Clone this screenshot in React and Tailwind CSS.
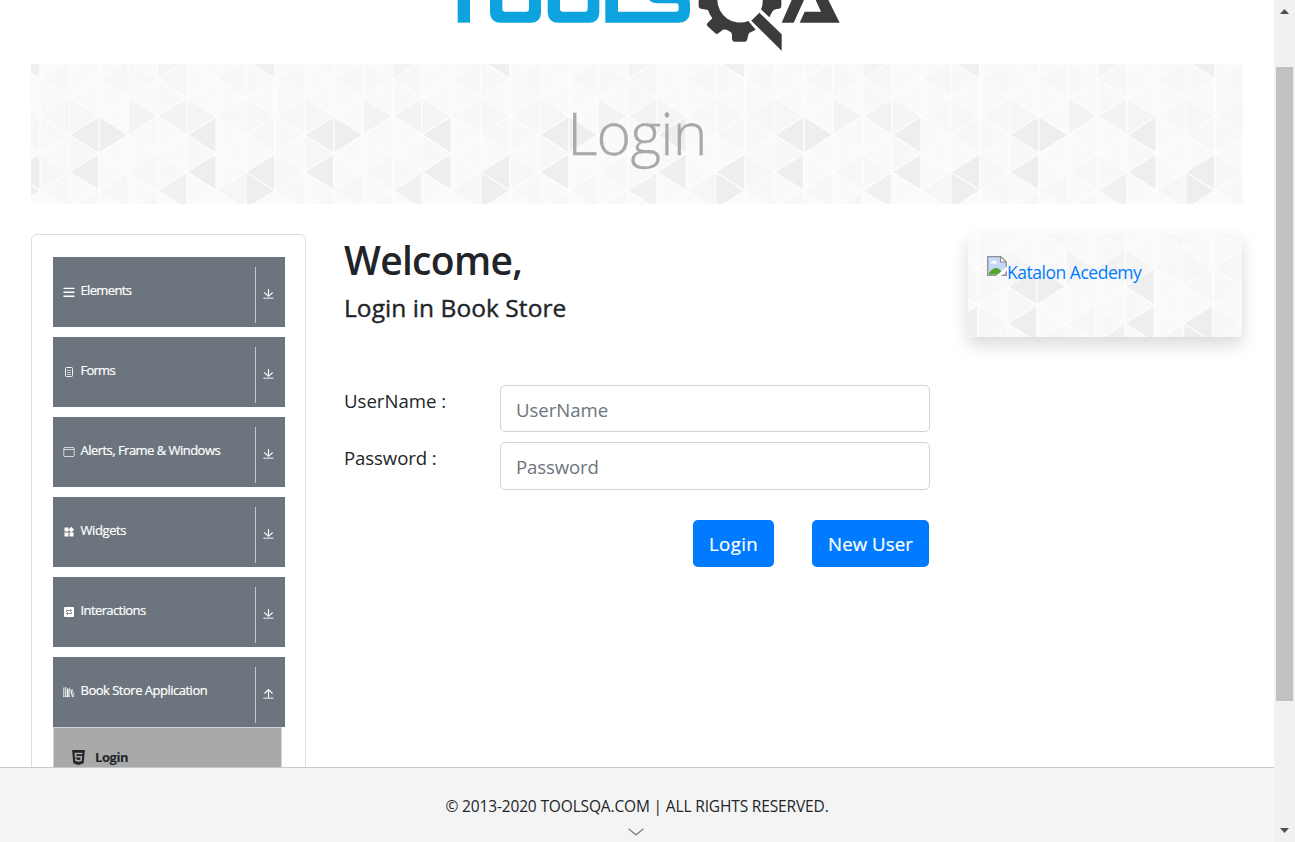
import React from "react";
import { MdWidgets } from "react-icons/md";
import { FaHtml5 } from "react-icons/fa";

const COL = 29.375;
const ROW = 18.57;
const SHADES = {
  "1,3": "#eeeeee", "2,3": "#eeeeee", "1,5": "#eeeeee", "5,3": "#eeeeee", "5,5": "#eeeeee",
  "7,5": "#eeeeee", "7,6": "#eeeeee", "7,-1": "#f0f0f0", "4,6": "#f1f1f1", "3,2": "#f3f3f3",
  "4,2": "#f3f3f3", "4,-1": "#f4f4f4", "2,0": "#f7f7f7", "3,0": "#f8f8f8", "4,0": "#f7f7f7",
  "1,2": "#f6f6f6", "5,2": "#f5f5f5", "7,2": "#f7f7f7", "0,2": "#f7f7f7", "6,2": "#f8f8f8",
  "0,3": "#f8f8f8", "3,3": "#f9f9f9", "7,3": "#f7f7f7", "0,5": "#f7f7f7", "3,5": "#f7f7f7",
  "4,5": "#f8f8f8", "6,6": "#f6f6f6", "0,6": "#f8f8f8", "2,6": "#f7f7f7", "1,4": "#f7f7f7",
  "5,4": "#f8f8f8", "7,0": "#f8f8f8", "6,0": "#f7f7f7", "0,0": "#f8f8f8", "4,1": "#f8f8f8",
  "1,-1": "#f9f9f9", "6,1": "#fafafa", "0,1": "#f9f9f9", "1,7": "#f7f7f7", "3,7": "#f7f7f7",
};

function TrianglePattern({ width, height }) {
  const originX = width / 2 + 137.5 - COL - 235 * 4;
  const originY = height / 2 + 1 - ROW * 3;
  const cells = [];
  for (let k = 0; k < 64; k++) {
    const x = originX + k * COL;
    if (x > width || x + COL < 0) continue;
    for (let j = -2; j < 9; j++) {
      const y = originY + j * ROW;
      const left = (k + j) % 2 === 0;
      const a = left ? x : x + COL;
      const b = left ? x + COL : x;
      cells.push(
        <path
          key={`${k},${j}`}
          d={`M${a} ${y}L${b} ${y - ROW}V${y + ROW}Z`}
          fill={SHADES[`${k % 8},${j}`] || "#fafafa"}
        />
      );
    }
  }
  return (
    <svg className="absolute inset-0" width={width} height={height} stroke="#fdfdfd" strokeWidth="1.6" strokeOpacity="0.8">
      {cells}
    </svg>
  );
}

function Logo() {
  return (
    <svg width="420" height="64" viewBox="0 0 1260 192">
      <g fill="#0ca3df">
        <path d="M53 0H90V68H53Z" />
        <path d="M150 0V38Q152 68 182 68H272Q302 68 303 38V0H267V28Q267 35 260 35H194Q187 35 187 28V0Z" />
        <path d="M323 0V38Q325 68 355 68H447Q477 68 478 38V0H443V28Q443 35 436 35H367Q360 35 360 28V0Z" />
        <path d="M496 0H534V35H708Q716 35 716 28V18Q716 10 708 10H655Q636 10 628 0H748Q750 4 750 12V36Q748 68 716 68H496Z" />
      </g>
      <g fill="#3b3b3b">
        <path d="M776 0V20Q777 25 783 26L804 30Q808 43 817 55L802 70Q798 75 803 79L826 100Q830 104 836 99L849 89Q859 88 866 93Q876 96 876 106V118Q877 125 884 125H914Q921 125 922 118L925 104Q927 97 934 96L947 89L925 63A68 68 0 0 1 832 0Z" />
        <path d="M968 0Q969 16 963 28L988 52L998 33Q1002 28 1010 27L1018 26Q1024 24 1024 18V0Z" />
        <path d="M958 38L1025 103V152L934 62Z" />
        <path d="M1055 0H1092L1061 68H1025Z" />
        <path d="M1127 0H1165L1199 68H1079L1094 35H1143Z" />
      </g>
    </svg>
  );
}

const ElementsIcon = () => (
  <svg width="12" height="12" viewBox="0 0 12 12" stroke="#fff" strokeWidth="1.4">
    <path d="M.5 2.4H11.5M.5 6.3H11.5M.5 10.2H11.5" />
  </svg>
);
const FormsIcon = () => (
  <svg width="12" height="12" viewBox="0 0 12 12" fill="none" stroke="#fff">
    <rect x="2.5" y="1.5" width="7" height="9" rx="1" strokeOpacity=".9" />
    <path d="M4 4.5H8M4 6.5H8M4 8.5H8M4 1.5H8" strokeOpacity=".6" />
  </svg>
);
const WindowIcon = () => (
  <svg width="12" height="12" viewBox="0 0 12 12" fill="none" stroke="#fff" strokeOpacity=".7">
    <rect x=".8" y="1.5" width="10.4" height="9" rx="1" />
    <path d="M1 3.5H11" />
  </svg>
);
const InteractionsIcon = () => (
  <svg width="12" height="12" viewBox="0 0 12 12">
    <rect x="1" y="1" width="10" height="10" rx="1" fill="#fff" />
    <path d="M3.5 6V4.5H8.2M7.2 3.2L8.6 4.5L7.2 5.6M8.5 6V7.5H3.8M4.8 6.4L3.4 7.5L4.8 8.8" fill="none" stroke="#6c757d" strokeWidth=".8" />
  </svg>
);
const BooksIcon = () => (
  <svg width="12" height="12" viewBox="0 0 12 12" fill="none" stroke="#fff">
    <path d="M.8 1.5V11M2.6 1V11" strokeWidth="1.1" strokeOpacity=".8" />
    <path d="M4.7 2.5V11" strokeWidth="1.7" />
    <path d="M6.5 1.5V11" strokeWidth=".8" strokeOpacity=".7" />
    <path d="M7.7 3.4L9.6 11" strokeWidth="1.1" />
    <path d="M9.2 3L11.4 10.8" strokeWidth=".8" strokeOpacity=".8" />
    <path d="M0 10.7H7" strokeWidth=".6" strokeOpacity=".6" />
  </svg>
);

function ArrowIcon({ up }) {
  return (
    <svg width="12" height="12" viewBox="0 0 12 12" fill="none" stroke="#fff" strokeWidth="1.1">
      {up ? <path d="M5.5 9.5V1.8M1.5 5.5L5.5 1.6L9.5 5.5" /> : <path d="M5.5 1V8.3M1.3 4.5L5.5 8.3L9.7 4.5" />}
      <path d="M.4 10.2H10.6" strokeWidth="1.4" strokeOpacity=".65" />
    </svg>
  );
}

const GROUPS = [
  { label: "Elements", icon: <ElementsIcon />, track: "tracking-[-0.65px]" },
  { label: "Forms", icon: <FormsIcon />, track: "tracking-[-0.75px]" },
  { label: "Alerts, Frame & Windows", icon: <WindowIcon />, track: "tracking-[-0.53px]" },
  { label: "Widgets", icon: <MdWidgets size={12} />, track: "tracking-[-0.4px]" },
  { label: "Interactions", icon: <InteractionsIcon />, track: "tracking-[-0.6px]" },
  { label: "Book Store Application", icon: <BooksIcon />, track: "tracking-[-0.5px]", open: true },
];

function Sidebar() {
  return (
    <aside className="h-[640px] w-[275px] shrink-0 rounded-md border border-[#dcdddf] pt-[22px] pl-[21px]">
      <div className="flex w-[232px] flex-col gap-[10px]">
        {GROUPS.map((g) => (
          <div key={g.label} className="flex h-[70px] bg-[#6c757d] text-white">
            <div className="flex w-[202px] items-start pt-[22px] pl-[10px]">
              <span className="mt-[7px] flex w-[17.5px]">{g.icon}</span>
              <span className={`text-[13px] leading-[23px] whitespace-nowrap [-webkit-text-stroke:0.2px] ${g.track}`}>{g.label}</span>
            </div>
            <div className="mt-[10px] flex h-[56px] w-[30px] border-l border-[#c3c7cb] pt-[21px] pl-[7px]">
              <ArrowIcon up={g.open} />
            </div>
          </div>
        ))}
      </div>
      <div className="flex h-[60px] w-[229px] items-start border border-[#ced4da] bg-[#a9a9a9] pt-[20px] pl-[16px] text-[#212529]">
        <FaHtml5 size={17} className="mt-px" />
        <span className="ml-[8px] text-[13px] leading-[19px] font-bold tracking-[-0.4px]">Login</span>
      </div>
    </aside>
  );
}

function BrokenImage() {
  return (
    <svg width="20" height="20" viewBox="0 0 20 20">
      <path d="M.7.7H13.5L19.3 6V19.3H.7Z" fill="#c5d8f7" stroke="#8f8f8f" strokeWidth="1.3" />
      <path d="M3.5 7.5Q3.5 5.5 5.5 5.5Q7 3 8.8 5.5Q10.5 5.8 10.3 7.5Z" fill="#fff" />
      <path d="M1.4 18.6Q4 12 9.5 12Q13.5 12.5 16 18.6Z" fill="#55a630" />
      <path d="M13.5.7V6H19.3Z" fill="#fff" stroke="#8f8f8f" strokeWidth="1.1" />
      <path d="M9 20L20 10.5V14.5L14 20Z" fill="#fff" />
    </svg>
  );
}

function Field({ label, height, track, inputTrack }) {
  return (
    <div className="flex">
      <label className={`w-[156px] pt-[2px] text-[18.6px] leading-[28px] ${track}`}>{label} :</label>
      <input
        placeholder={label}
        className={`${height} w-[430px] rounded-[5px] border border-[#ced4da] px-[15px] text-[18.6px] placeholder:text-[#6c757d] ${inputTrack}`}
      />
    </div>
  );
}

export default function App() {
  return (
    <div className="flex h-[842px] w-[1295px] overflow-hidden bg-white font-['Open_Sans','Noto_Sans',sans-serif] text-[#212529]">
      <div className="flex w-[1274px] flex-col">
        <div className="h-[767px] overflow-hidden">
          <header className="h-[64px] pl-[440px]">
            <Logo />
          </header>
          <div className="relative ml-[31px] flex h-[140px] w-[1212px] items-center justify-center overflow-hidden">
            <TrianglePattern width={1212} height={140} />
            <h1 className="relative pb-[5px] text-[59px] leading-[70px] font-light tracking-[-0.8px] text-[#a9a9a9] [-webkit-text-stroke:0.3px]">Login</h1>
          </div>
          <div className="mt-[30px] ml-[31px] flex">
            <Sidebar />
            <main className="ml-[38px] w-[586px] shrink-0">
              <h2 className="mt-[2px] text-[39px] leading-[48px] font-semibold tracking-[-0.7px]">Welcome,</h2>
              <h5 className="mt-[9px] text-[24.5px] leading-[30px] font-medium tracking-[0.06px] [-webkit-text-stroke:0.4px]">Login in Book Store</h5>
              <div className="mt-[62px] flex flex-col gap-[10px]">
                <Field label="UserName" height="h-[47px] pt-[2px]" track="tracking-[0px]" inputTrack="tracking-[-0.05px]" />
                <Field label="Password" height="h-[48px] pt-px pb-px" track="tracking-[-0.1px]" inputTrack="tracking-[-0.15px]" />
              </div>
              <div className="mt-[30px] mr-px flex justify-end gap-[38px] text-[18.6px] text-white [-webkit-text-stroke:0.2px]">
                <button className="h-[47px] w-[81px] rounded-[5px] bg-[#007bff] pt-px tracking-[0.4px]">Login</button>
                <button className="h-[47px] w-[117px] rounded-[5px] bg-[#007bff] pt-px tracking-[0.1px]">New User</button>
              </div>
            </main>
            <div className="relative ml-[38px] h-[103px] w-[274px] shadow-[0_8px_16px_rgba(0,0,0,0.15)]">
              <TrianglePattern width={274} height={103} />
              <div className="relative flex pt-[22px] pl-[19px]">
                <BrokenImage />
                <a className="mt-[2px] text-[17.5px] leading-[28px] tracking-[-0.47px] whitespace-nowrap text-[#007bff]">Katalon Acedemy</a>
              </div>
            </div>
          </div>
        </div>
        <footer className="flex h-[75px] flex-col items-center border-t border-[#c8c8c8] bg-[#f4f4f4]">
          <span className="mt-[26px] text-[15.5px] leading-[24px] tracking-[-0.15px] whitespace-nowrap">© 2013-2020 TOOLSQA.COM | ALL RIGHTS RESERVED.</span>
          <svg className="mt-[10px] -ml-[3px] shrink-0" width="16" height="8" viewBox="0 0 16 8" fill="none" stroke="#808080" strokeWidth="1.3">
            <path d="M.5.7L8 6.8L15.5.7" />
          </svg>
        </footer>
      </div>
      <div className="flex w-[21px] flex-col items-center bg-[#f1f1f1]">
        <svg className="mt-[9px]" width="9" height="5" viewBox="0 0 9 5"><path d="M0 5L4.5 0L9 5Z" fill="#505050" /></svg>
        <div className="mt-[53px] h-[634px] w-[17px] bg-[#c1c1c1]" />
        <svg className="mt-[127px]" width="9" height="5" viewBox="0 0 9 5"><path d="M0 0L4.5 5L9 0Z" fill="#505050" /></svg>
      </div>
    </div>
  );
}
